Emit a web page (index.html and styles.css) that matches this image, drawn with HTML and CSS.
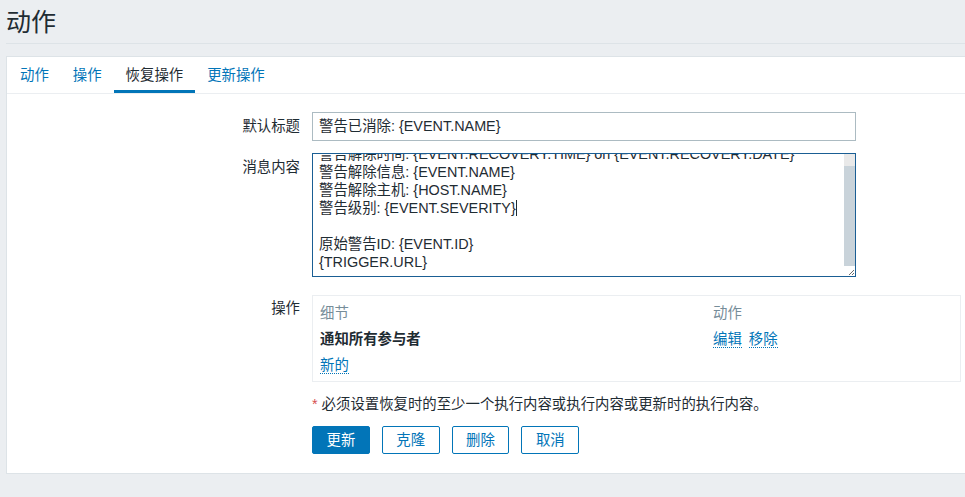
FILE: index.html
```html
<!DOCTYPE html>
<html lang="zh-CN">
<head>
<meta charset="utf-8">
<title>动作</title>
<link rel="stylesheet" href="styles.css">
</head>
<body>
<div class="wrapper">
  <header class="page-header">
    <h1 class="page-title">动作</h1>
  </header>
  <main class="card">
    <nav class="tabs">
      <a class="tab">动作</a>
      <a class="tab">操作</a>
      <a class="tab tab-active">恢复操作</a>
      <a class="tab">更新操作</a>
    </nav>
    <div class="form">
      <label class="form-label label-input">默认标题</label>
      <div class="form-field">
        <div class="input">警告已消除: {EVENT.NAME}</div>
      </div>

      <label class="form-label label-textarea">消息内容</label>
      <div class="form-field">
        <div class="textarea">
          <div class="textarea-content">
            <div class="line">警告解除时间: {EVENT.RECOVERY.TIME} on {EVENT.RECOVERY.DATE}</div>
            <div class="line">警告解除信息: {EVENT.NAME}</div>
            <div class="line">警告解除主机: {HOST.NAME}</div>
            <div class="line">警告级别: {EVENT.SEVERITY}<span class="caret"></span></div>
            <div class="line">&nbsp;</div>
            <div class="line">原始警告ID: {EVENT.ID}</div>
            <div class="line">{TRIGGER.URL}</div>
          </div>
          <div class="scrollbar">
            <div class="scroll-track"></div>
            <div class="scroll-thumb"></div>
            <div class="scroll-corner">
              <svg width="8" height="8" viewBox="0 0 8 8"><path d="M7 2 L2 7 M7 5 L5 7" stroke="#6b6b6b" stroke-width="1" fill="none"/></svg>
            </div>
          </div>
        </div>
      </div>

      <label class="form-label label-ops">操作</label>
      <div class="form-field">
        <div class="ops-box">
          <table class="ops-table">
            <tr class="ops-head"><th class="col-detail">细节</th><th>动作</th></tr>
            <tr><td class="col-detail strong">通知所有参与者</td><td><a class="link">编辑</a><a class="link link-gap">移除</a></td></tr>
            <tr><td class="col-detail"><a class="link">新的</a></td><td></td></tr>
          </table>
        </div>
      </div>

      <div class="form-spacer"></div>
      <div class="form-field note"><span class="asterisk">*</span> 必须设置恢复时的至少一个执行内容或执行内容或更新时的执行内容。</div>

      <div class="form-spacer"></div>
      <div class="form-field buttons">
        <button class="btn btn-primary">更新</button>
        <button class="btn">克隆</button>
        <button class="btn">删除</button>
        <button class="btn">取消</button>
      </div>
    </div>
  </main>
</div>
</body>
</html>
```

FILE: styles.css
```css
* { box-sizing: border-box; }
html, body {
  margin: 0;
  padding: 0;
  background: #ebeef1;
  color: #1f2c33;
  font-family: "Liberation Sans", "Noto Sans CJK SC", sans-serif;
  font-size: 14.4px;
  overflow: hidden;
}
.wrapper {
  padding-left: 6px;
  width: 1000px;
}
.page-header {
  height: 44px;
  border-bottom: 1px solid #dde3e7;
}
.page-title {
  margin: 0;
  padding-top: 6px;
  font-size: 25px;
  line-height: 32px;
  font-weight: normal;
  color: #1f2c33;
}
.card {
  margin-top: 12px;
  background: #fff;
  border: 1px solid #dde3e7;
  border-right: none;
  height: 418px;
}
.tabs {
  display: flex;
  height: 37px;
  border-bottom: 1px solid #ebeef1;
  padding-left: 1px;
}
.tab {
  padding: 0 12px;
  line-height: 36px;
  height: 36px;
  color: #0275b8;
  border-bottom: 3px solid transparent;
  cursor: pointer;
}
.tab-active {
  color: #1f2c33;
  border-bottom-color: #0275b8;
}
.form {
  display: grid;
  grid-template-columns: 293px 1fr;
  column-gap: 12px;
  padding-top: 18px;
  align-items: start;
}
.form-label {
  text-align: right;
  line-height: 18px;
}
.label-input { padding-top: 5px; }
.label-textarea { padding-top: 5px; margin-top: 12px; }
.label-ops { padding-top: 4px; margin-top: 18px; }
.form-spacer { height: 1px; }
.input {
  width: 544px;
  height: 29px;
  border: 1px solid #acbbc2;
  padding: 0 6px;
  line-height: 27px;
  background: #fff;
}
.textarea {
  margin-top: 12px;
  width: 544px;
  height: 124px;
  border: 1px solid #1a5e94;
  position: relative;
  overflow: hidden;
  background: #fff;
}
.textarea-content {
  margin-top: -9px;
  padding-left: 6px;
  padding-right: 16px;
  white-space: nowrap;
}
.line {
  height: 18px;
  line-height: 18px;
}
.caret {
  display: inline-block;
  width: 1px;
  height: 16px;
  background: #1f2c33;
  vertical-align: -3px;
}
.scrollbar {
  position: absolute;
  top: 0;
  right: 0;
  width: 11px;
  height: 100%;
  display: flex;
  flex-direction: column;
}
.scroll-track {
  height: 12px;
  background: #e9e9e9;
}
.scroll-thumb {
  flex: 1;
  background: #c9d3da;
}
.scroll-corner {
  height: 10px;
  background: #fff;
  display: flex;
  align-items: flex-end;
  justify-content: flex-end;
}
.scroll-corner svg { display: block; }
.ops-box {
  margin-top: 18px;
  width: 649px;
  height: 87px;
  border: 1px solid #ebeef1;
  padding: 4px 7px 4px 7px;
}
.ops-table {
  border-collapse: collapse;
  width: 100%;
}
.ops-table th,
.ops-table td {
  padding: 0;
  height: 26px;
  line-height: 18px;
  text-align: left;
  vertical-align: middle;
  font-weight: normal;
}
.ops-head th { color: #768d99; }
.col-detail { width: 393px; }
.strong { font-weight: bold !important; }
.link {
  color: #0275b8;
  border-bottom: 1px dotted #0275b8;
  cursor: pointer;
}
.link-gap { margin-left: 7px; }
.note {
  margin-top: 13px;
  line-height: 18px;
}
.asterisk { color: #d64e4e; }
.buttons {
  margin-top: 13px;
  display: flex;
  gap: 12px;
}
.btn {
  height: 28px;
  padding: 0 13.5px;
  font-family: "Liberation Sans", "Noto Sans CJK SC", sans-serif;
  font-size: 14.4px;
  line-height: 26px;
  border: 1px solid #0275b8;
  border-radius: 2px;
  background: #fff;
  color: #0275b8;
}
.btn-primary {
  background: #0275b8;
  color: #fff;
}
```
